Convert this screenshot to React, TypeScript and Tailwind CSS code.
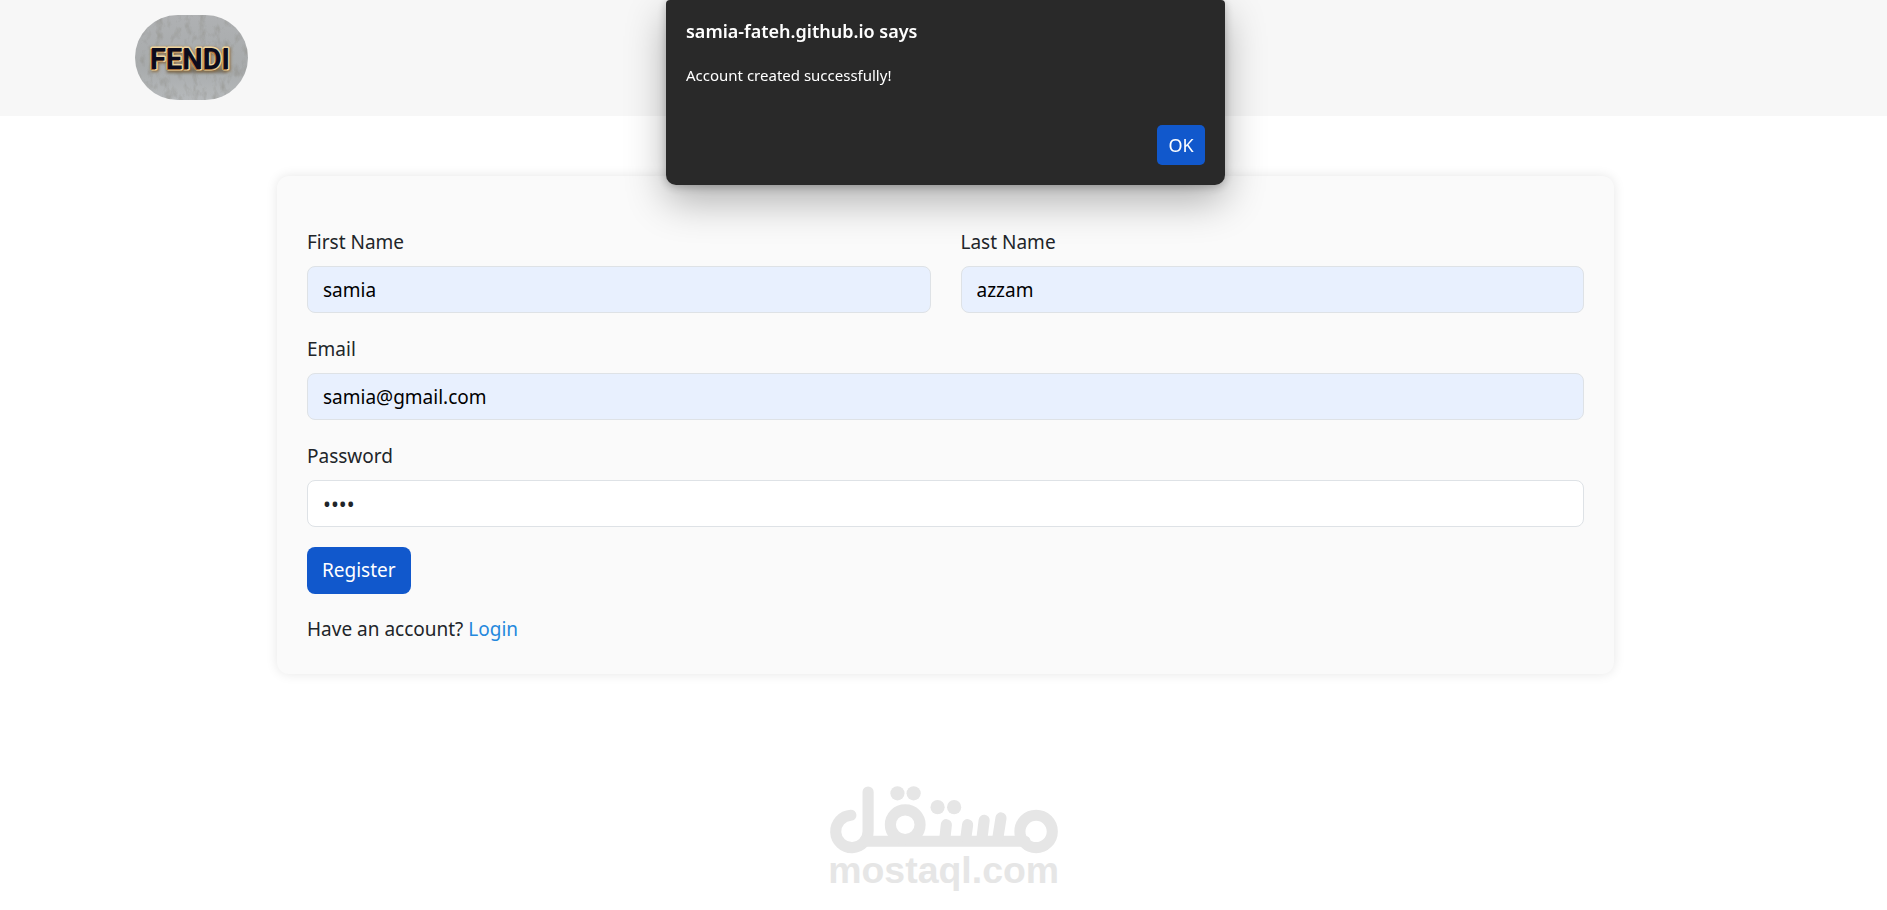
import React, { useEffect, useState } from 'react';

interface FieldProps {
  id: string;
  label: string;
  type?: string;
  value: string;
  autoFilled?: boolean;
  onChange: (value: string) => void;
}

const Field: React.FC<FieldProps> = ({ id, label, type = 'text', value, autoFilled = false, onChange }) => (
  <div>
    <label htmlFor={id} className="block mb-2 leading-8 text-[#212529]">
      {label}
    </label>
    <input
      id={id}
      type={type}
      value={value}
      onChange={(e) => onChange(e.target.value)}
      className={`block w-full h-[47px] px-[15px] rounded-lg border border-[#dee2e6] outline-none ${
        type === 'password' ? 'text-[21px]' : 'text-[19px]'
      } ${autoFilled ? 'bg-[#e8f0fe] text-black' : 'bg-white text-[#212529]'}`}
    />
  </div>
);

// Brand photo: dark letters with a warm back light on a concrete wall
const Logo: React.FC = () => (
  <svg width="113" height="85" viewBox="0 0 113 85" role="img" aria-label="Fendi" className="rounded-[50px]">
    <defs>
      <linearGradient id="wall" x1="0" y1="0" x2="0" y2="1">
        <stop offset="0" stopColor="#afb1b3" />
        <stop offset="0.6" stopColor="#a8abac" />
        <stop offset="1" stopColor="#b6b9bb" />
      </linearGradient>
      <filter id="concrete" x="0" y="0" width="100%" height="100%">
        <feTurbulence type="fractalNoise" baseFrequency="0.14 0.08" numOctaves="4" seed="4" />
        <feColorMatrix values="0 0 0 0 0.3  0 0 0 0 0.3  0 0 0 0 0.28  2.4 0 0 0 -1.15" />
      </filter>
      <filter id="soft" x="-20%" y="-50%" width="140%" height="200%">
        <feGaussianBlur stdDeviation="1.5" />
      </filter>
    </defs>
    <rect width="113" height="85" fill="url(#wall)" />
    <rect width="113" height="85" filter="url(#concrete)" opacity="0.7" />
    <rect x="32" y="52" width="60" height="6" fill="#6b6455" filter="url(#soft)" opacity="0.8" />
    <g fontFamily="Roboto, sans-serif" fontWeight="700" fontSize="29">
      <text x="16" y="55" fill="#8a6a3c" stroke="#8a6a3c" strokeWidth="3" filter="url(#soft)">FENDI</text>
      <text x="15" y="54" fill="#efd5a0" stroke="#efd5a0" strokeWidth="3" strokeLinejoin="round">FENDI</text>
      <text x="14" y="55" fill="#a8703a">FENDI</text>
      <text x="15" y="54" fill="#0b0b1c">FENDI</text>
    </g>
  </svg>
);

const Watermark: React.FC = () => (
  <svg width="270" height="140" viewBox="0 0 800 415" role="img" aria-label="mostaql.com">
    <g fill="none" stroke="#e6e6e6" strokeWidth="33" strokeLinecap="round">
      <path d="M124 140 A48 48 0 1 0 175 187 V71" />
      <path d="M165 217 H640" />
      <circle cx="285" cy="168" r="44" />
      <circle cx="673" cy="188" r="48" />
      <path d="M407 168 L403 205" />
      <path d="M470 168 L465 205" />
      <path d="M519 155 L513 205" />
      <path d="M569 148 L560 205" />
    </g>
    <g fill="#e6e6e6">
      <circle cx="262" cy="75" r="21" />
      <circle cx="310" cy="75" r="21" />
      <circle cx="381" cy="116" r="21" />
      <circle cx="430" cy="116" r="21" />
    </g>
    <text
      x="399"
      y="342"
      textAnchor="middle"
      fontFamily="Liberation Sans, sans-serif"
      fontWeight="700"
      fontSize="111"
      fill="#e6e6e6"
    >
      mostaql.com
    </text>
  </svg>
);

interface AlertProps {
  message: string;
  onClose: () => void;
}

const AlertDialog: React.FC<AlertProps> = ({ message, onClose }) => (
  <div className="fixed inset-x-0 top-0 flex justify-center pl-1">
    <div
      role="alertdialog"
      aria-labelledby="alert-title"
      aria-describedby="alert-message"
      className="w-full max-w-[559px] rounded-t-sm rounded-b-[10px] bg-[#292929] px-5 pt-[15px] pb-5 text-white shadow-[0_16px_40px_rgba(0,0,0,0.3),0_2px_10px_rgba(0,0,0,0.25)]"
    >
      <h2 id="alert-title" className="text-[18px] leading-8 font-semibold">samia-fateh.github.io says</h2>
      <p id="alert-message" className="mt-4 text-[15px] leading-6">{message}</p>
      <div className="mt-[38px] flex justify-end">
        <button onClick={onClose} className="h-10 w-12 rounded-[5px] bg-[#1158cc] text-[18px]">OK</button>
      </div>
    </div>
  </div>
);

const App: React.FC = () => {
  const [firstName, setFirstName] = useState('samia');
  const [lastName, setLastName] = useState('azzam');
  const [email, setEmail] = useState('samia@gmail.com');
  const [password, setPassword] = useState('1234');
  const [showAlert, setShowAlert] = useState(true);

  useEffect(() => {
    document.title = 'Register';
  }, []);

  const handleSubmit = (e: React.FormEvent) => {
    e.preventDefault();
    setShowAlert(true);
  };

  return (
    <div className="min-h-screen bg-white font-['Noto_Sans','Open_Sans',sans-serif] text-[19px] text-[#212529]">
      <header className="bg-[#f7f7f7] py-[15px]">
        <div className="mx-auto flex h-[86px] max-w-[1650px] px-4">
          <a href="#home"><Logo /></a>
        </div>
      </header>

      <main className="pt-[60px] pl-1">
        <form
          onSubmit={handleSubmit}
          className="mx-auto max-w-[1337px] rounded-xl bg-[#fafafa] px-[30px] pt-[50px] pb-[30px] shadow-[0_0_12px_rgba(0,0,0,0.1)]"
        >
          <div className="grid gap-5">
            <div className="grid grid-cols-2 gap-[30px]">
              <Field id="first-name" label="First Name" value={firstName} onChange={setFirstName} autoFilled />
              <Field id="last-name" label="Last Name" value={lastName} onChange={setLastName} autoFilled />
            </div>
            <Field id="email" label="Email" type="email" value={email} onChange={setEmail} autoFilled />
            <Field id="password" label="Password" type="password" value={password} onChange={setPassword} />
          </div>
          <button type="submit" className="mt-5 block h-[47px] rounded-lg bg-[#1158cc] px-[15px] text-white">
            Register
          </button>
          <p className="mt-5 leading-[30px]">
            Have an account? <a href="#login" className="text-[#2488dd]">Login</a>
          </p>
        </form>
      </main>

      <footer className="mt-[94px] flex justify-center">
        <Watermark />
      </footer>

      {showAlert && <AlertDialog message="Account created successfully!" onClose={() => setShowAlert(false)} />}
    </div>
  );
};

export default App;
